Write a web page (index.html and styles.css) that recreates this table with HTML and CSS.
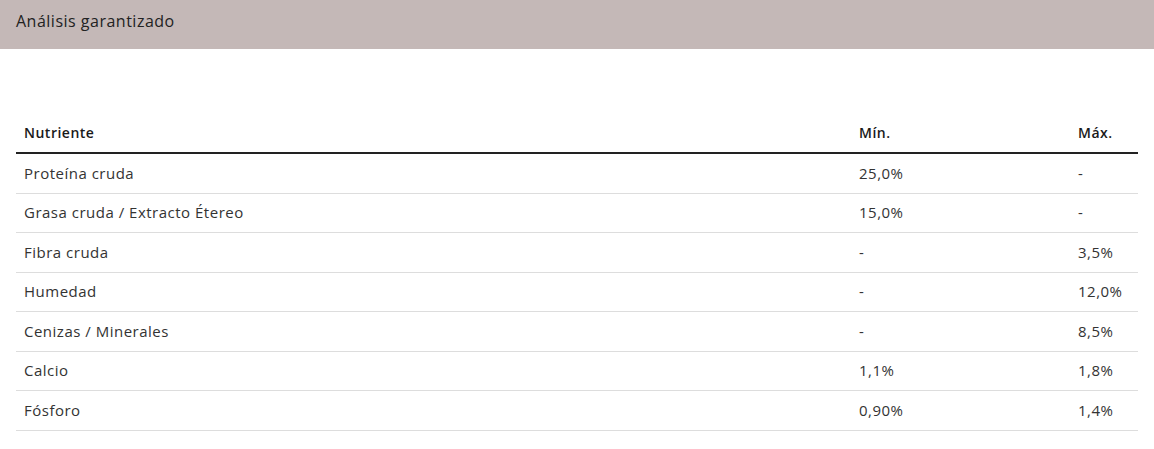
FILE: index.html
```html
<!DOCTYPE html>
<html lang="es">
<head>
<meta charset="utf-8">
<link rel="stylesheet" href="styles.css">
</head>
<body>
<div class="bar"><h2 class="bar-title">Análisis garantizado</h2></div>
<div class="content">
<table class="nutri">
<thead>
<tr><th class="c1">Nutriente</th><th class="c2">Mín.</th><th class="c3">Máx.</th></tr>
</thead>
<tbody>
<tr><td>Proteína cruda</td><td>25,0%</td><td>-</td></tr>
<tr><td>Grasa cruda / Extracto Étereo</td><td>15,0%</td><td>-</td></tr>
<tr><td>Fibra cruda</td><td>-</td><td>3,5%</td></tr>
<tr><td>Humedad</td><td>-</td><td>12,0%</td></tr>
<tr><td>Cenizas / Minerales</td><td>-</td><td>8,5%</td></tr>
<tr><td>Calcio</td><td>1,1%</td><td>1,8%</td></tr>
<tr><td>Fósforo</td><td>0,90%</td><td>1,4%</td></tr>
</tbody>
</table>
</div>
</body>
</html>
```
FILE: styles.css
```css
html, body { margin: 0; padding: 0; background: #fff; }
body { font-family: "Open Sans", "Noto Sans", sans-serif; color: #333; }
.bar { background: #c4b8b7; height: 49px; display: flex; align-items: center; padding: 0 16px; box-sizing: border-box; }
.bar-title { margin: 0; margin-top: -7px; font-size: 16px; line-height: 20px; font-weight: 500; color: #222; letter-spacing: 0.5px; }
.content { padding: 62px 16px 0; }
.nutri { width: 100%; border-collapse: collapse; font-size: 15px; letter-spacing: 0.5px; }
.nutri th { text-align: left; font-size: 14px; font-weight: 600; color: #1a1a1a; padding: 12px 8px 10px; line-height: 19px; border-bottom: 2px solid #222; }
.nutri td { padding: 0 8px; height: 38.5px; line-height: 19px; border-bottom: 1px solid #ddd; color: #333; }
.c1 { width: auto; }
.c2 { width: 203px; }
.c3 { width: 52px; }
```
